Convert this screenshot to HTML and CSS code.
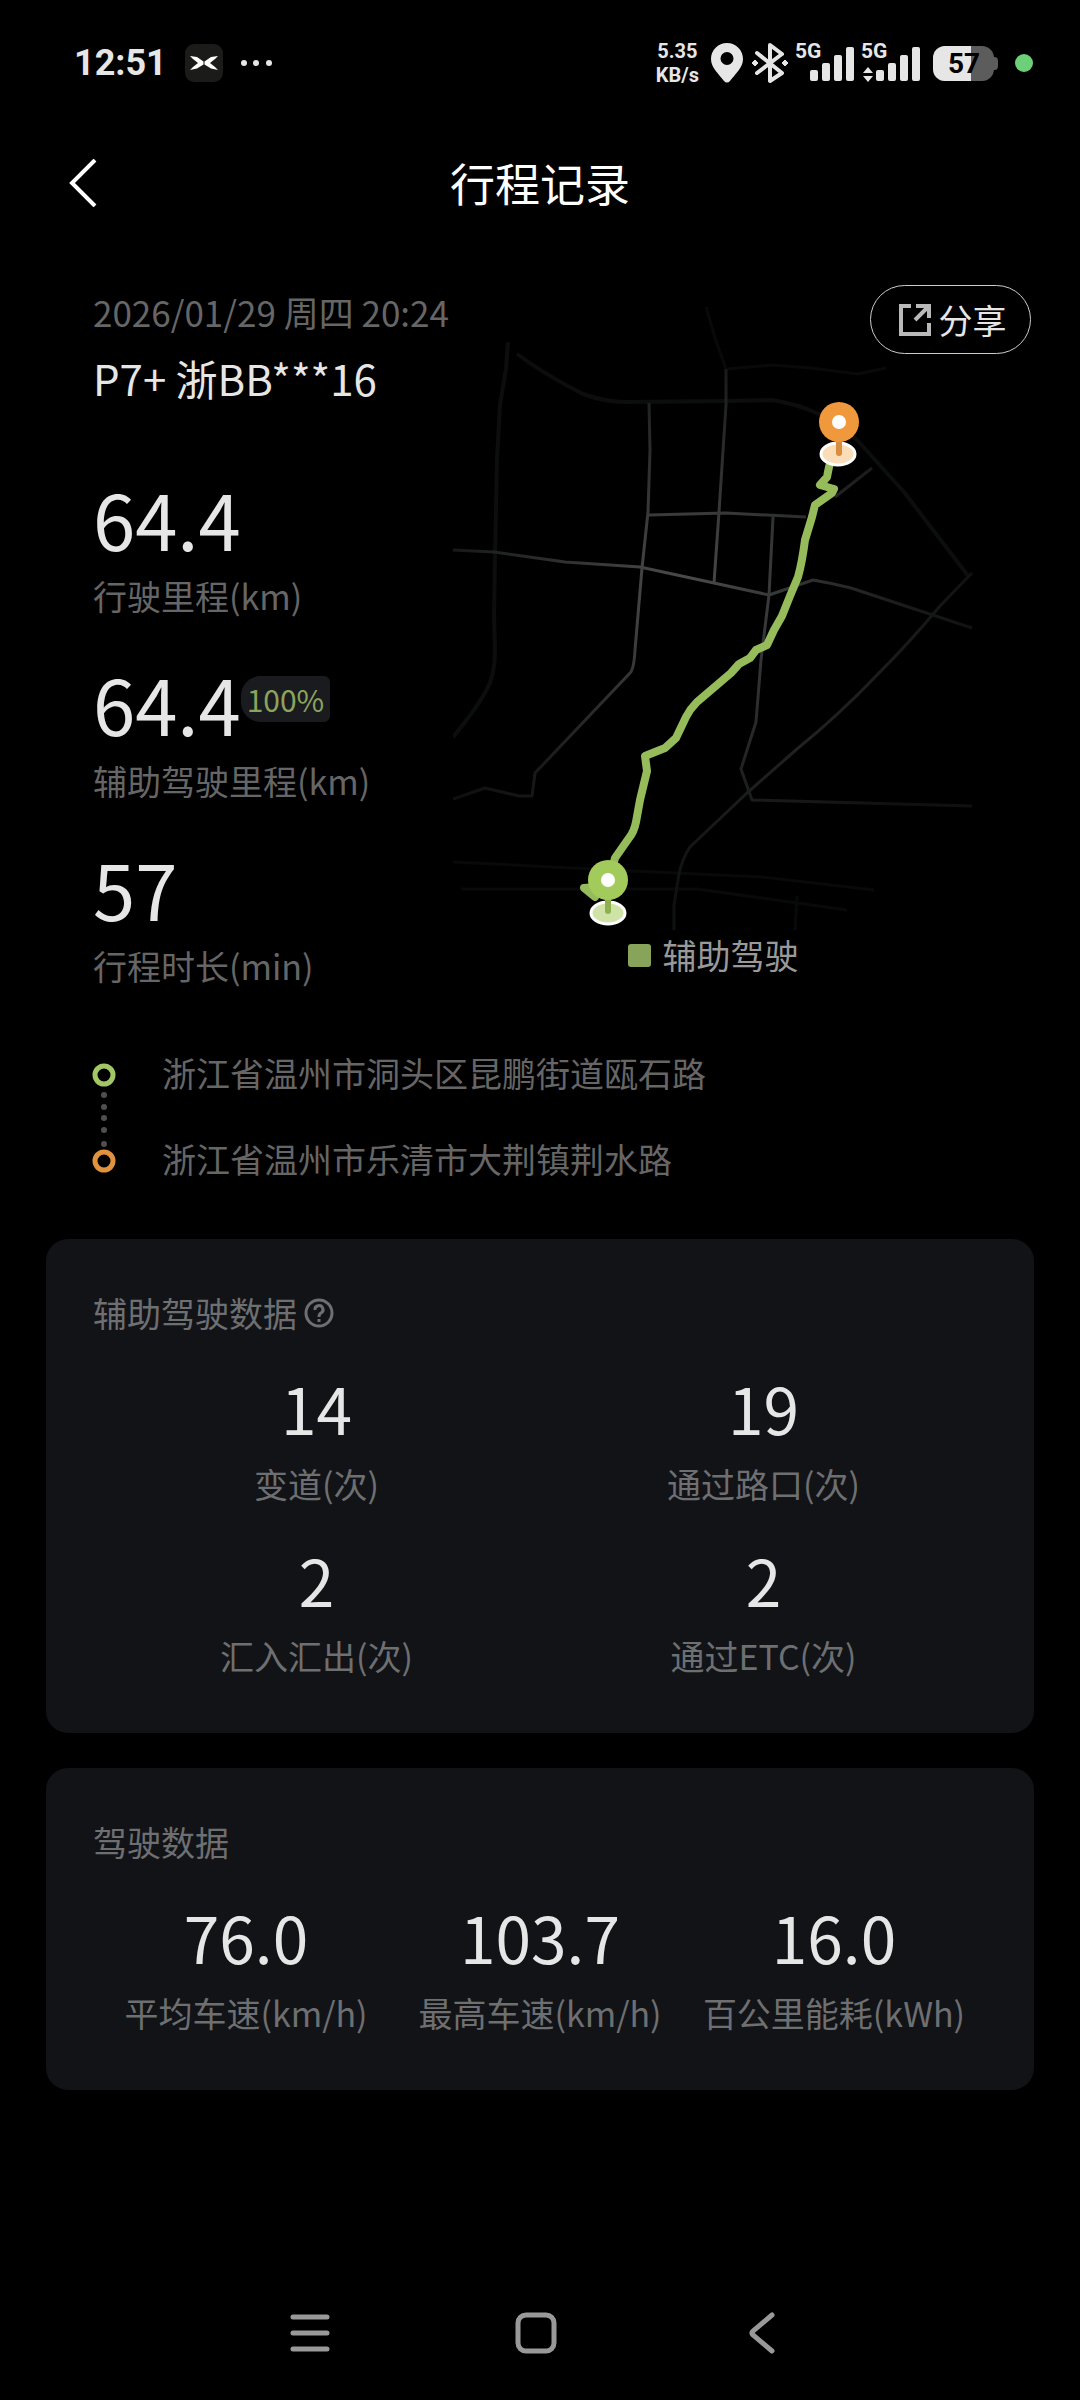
FILE: index.html
```html
<!DOCTYPE html>
<html lang="zh-CN">
<head>
  <meta charset="utf-8" />
  <meta name="viewport" content="width=device-width, initial-scale=1" />
  <title>行程记录</title>
  <link rel="stylesheet" href="styles.css">
</head>
<body>
  <!-- 状态栏 -->
  <div class="status">
    <div class="status-side">
      <span class="clock">12:51</span>
      <svg class="app-icon" width="38" height="38" viewBox="0 0 38 38" aria-hidden="true">
        <rect width="38" height="38" rx="9" fill="#1b1b19"/>
        <g fill="#fff">
          <path d="M5 12 L12 13 L18.5 17.5 V20.5 L12 24.5 L5 26 L8 23 L13 19 L8 15 Z"/>
          <path d="M33 12 L26 13 L19.5 17.5 V20.5 L26 24.5 L33 26 L30 23 L25 19 L30 15 Z"/>
        </g>
      </svg>
      <svg width="34" height="10" viewBox="0 0 34 10" fill="#e6e6e6" aria-hidden="true">
        <circle cx="3" cy="5" r="3"/><circle cx="15" cy="5" r="3"/><circle cx="28" cy="5" r="3"/>
      </svg>
    </div>
    <div class="status-side status-right">
      <span class="speed"><span>5.35</span><span>KB/s</span></span>
      <svg width="32" height="42" viewBox="0 0 32 42" aria-hidden="true">
        <path fill="#e6e6e6" fill-rule="evenodd" d="M16 1 C7 1 0 8 0 17 C0 26 8 32 13 39 Q16 42 19 39 C24 32 32 26 32 17 C32 8 25 1 16 1 Z M16 10 a6 6 0 1 1 0 13 a6 6 0 1 1 0 -13 Z"/>
      </svg>
      <svg width="38" height="42" viewBox="0 0 38 42" aria-hidden="true">
        <path d="M6 11 L31 31 L19 39 V3 L31 12 L6 31" fill="none" stroke="#e6e6e6" stroke-width="4" stroke-linecap="round" stroke-linejoin="round"/>
        <path d="M4 18 L7 21 L4 24 L1 21 Z M34 18 L37 21 L34 24 L31 21 Z" fill="#e6e6e6" stroke="#e6e6e6" stroke-linejoin="round"/>
      </svg>
      <svg class="signal" width="60" height="50" viewBox="0 -4 60 50" fill="#e6e6e6" role="img" aria-label="5G">
        <text x="0" y="16">5G</text>
        <rect x="15" y="28" width="8" height="11" rx="2"/><rect x="27" y="21" width="8" height="18" rx="2"/>
        <rect x="39" y="13" width="8" height="26" rx="2"/><rect x="51" y="5" width="8" height="34" rx="2"/>
      </svg>
      <svg class="signal" width="60" height="50" viewBox="0 -4 60 50" fill="#e6e6e6" role="img" aria-label="5G">
        <text x="0" y="16">5G</text>
        <path d="M7 25 L12 31 H2 Z M7 40 L12 34 H2 Z"/>
        <rect x="15" y="28" width="8" height="11" rx="2"/><rect x="27" y="21" width="8" height="18" rx="2"/>
        <rect x="39" y="13" width="8" height="26" rx="2"/><rect x="51" y="5" width="8" height="34" rx="2"/>
      </svg>
      <svg class="battery" width="66" height="42" viewBox="0 0 66 42" role="img" aria-label="57%">
        <rect x="58" y="15" width="7" height="13" rx="4" fill="#5c5c5c"/>
        <rect x="0" y="4" width="61" height="35" rx="12" fill="#5c5c5c"/>
        <path d="M12 4 H38 V39 H12 A12 12 0 0 1 0 27 V16 A12 12 0 0 1 12 4 Z" fill="#e6e6e6"/>
        <text x="31" y="31" text-anchor="middle">57</text>
      </svg>
      <span class="live-dot"></span>
    </div>
  </div>

  <header class="topbar">
    <button type="button" class="back" aria-label="返回">
      <svg width="30" height="48" viewBox="0 0 30 48" aria-hidden="true">
        <path d="M27 1 L4 24 L27 47" fill="none" stroke="#fff" stroke-width="4"/>
      </svg>
    </button>
    <h1>行程记录</h1>
  </header>

  <main>
    <section class="trip">
      <div class="info">
        <p class="date">2026/01/29 周四 20:24</p>
        <h2 class="car">P7+ 浙BB***16</h2>
        <div class="totals">
          <div class="stat">
            <p class="num">64.4</p>
            <p class="label">行驶里程(km)</p>
          </div>
          <div class="stat">
            <p class="num">64.4<span class="percent">100%</span></p>
            <p class="label">辅助驾驶里程(km)</p>
          </div>
          <div class="stat">
            <p class="num">57</p>
            <p class="label">行程时长(min)</p>
          </div>
        </div>
      </div>

      <div class="map">
        <svg viewBox="0 0 520 630" role="img" aria-label="行程轨迹">
          <defs>
            <radialGradient id="road" gradientUnits="userSpaceOnUse" cx="230" cy="290" r="300">
              <stop offset="0" stop-color="#4c4c4c"/>
              <stop offset="0.4" stop-color="#303131"/>
              <stop offset="0.75" stop-color="#191a1a"/>
              <stop offset="1" stop-color="#0f1010"/>
            </radialGradient>
          </defs>
          <!-- 道路 -->
          <g fill="none" stroke="#0c0e0d" stroke-width="4" stroke-linejoin="round">
            <path d="M55 42 L53 69 L47 105 L44 159 L42 257 L41 315 L42 350 Q42 376 33 391 Q24 408 0 437"/>
            <path d="M64 54 Q94 76 130 94 Q152 102 173 102 L273 101 L319 100 Q345 104 366 114 Q388 125 405 141 L451 192 L516 277"/>
          </g>
          <g fill="none" stroke="#080909" stroke-width="3">
            <path d="M273 69 L319 65 L358 68 L405 74 L433 68"/>
            <path d="M253 7 L262 38 L273 69"/>
            <path d="M0 562 L180 571 L308 577 L421 590"/>
            <path d="M8 589 L244 589 L394 610"/>
            <path d="M344 596 L342 630"/>
          </g>
          <g fill="none" stroke="url(#road)" stroke-width="3" stroke-linejoin="round">
            <path d="M273 69 V105 L266 212 L261 283"/>
            <path d="M196 103 L197 150 L195 212 L189 268 L182 350 Q181 369 177 373 L82 473 L79 496 L66 496 L32 488 L0 499"/>
            <path d="M196 215 L273 213 L353 217"/>
            <path d="M0 250 L41 252 L112 262 L187 267 L261 283 L316 295 L360 280 Q378 283 398 288 L519 328"/>
            <path d="M320 217 L316 295 L308 360 L303 422 L288 469 L299 500 L519 506"/>
            <path d="M519 273 L487 306 Q456 343 426 373 Q386 415 344 449 L294 493 L237 547 Q229 559 226 574 L221 605 V630"/>
            <path d="M419 168 L382 197"/>
          </g>
          <!-- 轨迹 -->
          <path d="M378 160 L376 167 L374 177 L367 185 L381 189 L379 193 L362 205 L359 217 L352 240 Q349 263 345 277 L337 296 L329 316 L321 330 L314 345 L303 350 L297 358 L286 364 L278 373 L244 402 Q237 409 233 417 L223 438 L212 448 L192 456 L194 471 L187 500 L183 522 Q181 532 176 538 L162 558 L155 586 L131 588 L142 597" fill="none" stroke="#96bb5a" stroke-width="8" stroke-linejoin="round" stroke-linecap="round"/>
          <!-- 终点 -->
          <ellipse cx="385" cy="154" rx="17" ry="11" fill="#fbdcb9" stroke="#fff" stroke-width="3"/>
          <path d="M386 138 V153" stroke="#d98b3e" stroke-width="6" stroke-linecap="round"/>
          <circle cx="386" cy="122" r="20" fill="#f0983c"/>
          <circle cx="386" cy="122" r="7" fill="#fff"/>
          <!-- 起点 -->
          <ellipse cx="155" cy="613" rx="17" ry="11" fill="#cfe3a9" stroke="#fff" stroke-width="3"/>
          <path d="M155 597 V611" stroke="#8fb04f" stroke-width="6" stroke-linecap="round"/>
          <circle cx="155" cy="580" r="20" fill="#a3cb5b"/>
          <circle cx="155" cy="580" r="7" fill="#fff"/>
        </svg>
        <p class="legend"><span class="swatch"></span>辅助驾驶</p>
      </div>

      <button type="button" class="share">
        <svg width="32" height="32" viewBox="0 0 32 32" fill="none" stroke="#b9b9b9" stroke-width="4" aria-hidden="true">
          <path d="M12 2 H2 V30 H30 V19"/>
          <path d="M17 2 H30 V14 M29 3 L16 16"/>
        </svg>
        分享
      </button>
    </section>

    <section class="route">
      <svg class="route-line" width="24" height="110" viewBox="0 0 24 110" aria-hidden="true">
        <circle cx="12" cy="12" r="9" fill="none" stroke="#a3c765" stroke-width="5"/>
        <g fill="#4f4f4f">
          <circle cx="12" cy="32" r="3"/><circle cx="12" cy="44" r="3"/><circle cx="12" cy="55" r="3"/>
          <circle cx="12" cy="67" r="3"/><circle cx="12" cy="81" r="3"/>
        </g>
        <circle cx="12" cy="98" r="9" fill="none" stroke="#e0923f" stroke-width="5"/>
      </svg>
      <ol class="places">
        <li>浙江省温州市洞头区昆鹏街道瓯石路</li>
        <li>浙江省温州市乐清市大荆镇荆水路</li>
      </ol>
    </section>

    <section class="card">
      <h2 class="card-title">辅助驾驶数据
        <button type="button" class="help" aria-label="说明">
          <svg width="30" height="30" viewBox="0 0 30 30" fill="none" stroke="#6e6f71" stroke-width="3" aria-hidden="true">
            <circle cx="15" cy="15" r="13"/>
            <path d="M11 12 a4 4 0 1 1 6 3 Q15 16 15 19"/>
            <path d="M15 21 V24"/>
          </svg>
        </button>
      </h2>
      <div class="grid two">
        <div class="stat">
          <p class="num">14</p>
          <p class="label">变道(次)</p>
        </div>
        <div class="stat">
          <p class="num">19</p>
          <p class="label">通过路口(次)</p>
        </div>
        <div class="stat">
          <p class="num">2</p>
          <p class="label">汇入汇出(次)</p>
        </div>
        <div class="stat">
          <p class="num">2</p>
          <p class="label">通过ETC(次)</p>
        </div>
      </div>
    </section>

    <section class="card">
      <h2 class="card-title">驾驶数据</h2>
      <div class="grid three">
        <div class="stat">
          <p class="num">76.0</p>
          <p class="label">平均车速(km/h)</p>
        </div>
        <div class="stat">
          <p class="num">103.7</p>
          <p class="label">最高车速(km/h)</p>
        </div>
        <div class="stat">
          <p class="num">16.0</p>
          <p class="label">百公里能耗(kWh)</p>
        </div>
      </div>
    </section>
  </main>

  <!-- 系统导航键 -->
  <nav class="navkeys">
    <button type="button" aria-label="最近任务">
      <svg width="44" height="44" viewBox="0 0 44 44" aria-hidden="true">
        <path d="M5 6 H39 M5 22 H39 M5 38 H39"/>
      </svg>
    </button>
    <button type="button" aria-label="主屏幕">
      <svg width="44" height="44" viewBox="0 0 44 44" aria-hidden="true">
        <rect x="4" y="4" width="36" height="36" rx="8"/>
      </svg>
    </button>
    <button type="button" aria-label="返回">
      <svg width="44" height="44" viewBox="0 0 44 44" aria-hidden="true">
        <path d="M32 4 L13 20 Q11 22 13 24 L32 40"/>
      </svg>
    </button>
  </nav>
</body>
</html>
```
FILE: styles.css
```css
*{box-sizing:border-box;}
body{
  margin:0;
  min-height:100vh;
  display:flex;
  flex-direction:column;
  background:#000;
  color:#e6e6e6;
  font-family:"Noto Sans CJK SC",sans-serif;
  font-size:34px;
  line-height:50px;
}
h1,h2,p,ol{margin:0;padding:0;font-weight:400;}
button{
  padding:0;
  border:none;
  background:none;
  color:inherit;
  font:inherit;
  cursor:pointer;
}
svg{display:block;}

/* status bar */
.status{
  display:flex;
  justify-content:space-between;
  align-items:center;
  height:126px;
  padding:0 47px 0 74px;
  font-family:Roboto,sans-serif;
  font-weight:700;
}
.status-side{display:flex;align-items:center;gap:18px;}
.status-right{gap:8px;}
.clock{font-size:36px;}
.speed{
  display:grid;
  margin-right:4px;
  font-size:20px;
  line-height:24px;
  text-align:center;
}
.signal text{font-size:21px;}
.signal{margin-left:-2px;}
.battery{margin-left:4px;}
.battery text{font-size:28px;fill:#000;}
.live-dot{
  width:18px;
  height:18px;
  margin-left:8px;
  border-radius:50%;
  background:#6bd077;
}

/* title */
.topbar{
  display:grid;
  grid-template-columns:60px 1fr 60px;
  align-items:center;
  height:114px;
  padding:0 53px;
}
.back{display:flex;justify-content:center;}
.topbar h1{
  font-size:45px;
  line-height:60px;
  text-align:center;
  color:#fff;
}

/* trip summary */
.trip{
  position:relative;
  display:grid;
  grid-template-columns:360fr 520fr;
  align-items:start;
  padding:47px 107px 0 93px;
}
.date{font-size:35px;color:#666;white-space:nowrap;}
.car{margin-top:11px;font-size:42px;line-height:60px;}
.totals{
  display:grid;
  gap:37px;
  margin-top:65px;
}
.label{color:#666;white-space:nowrap;}
.totals .num{
  display:flex;
  align-items:flex-start;
  margin-bottom:8px;
  font-size:76px;
  line-height:90px;
}
.percent{
  margin-top:18px;
  padding:0 6px;
  border-radius:20px 6px 6px 20px;
  background:#1a1b1f;
  color:#8ca35c;
  font-size:30px;
  line-height:46px;
}
.map{margin-top:13px;}
.map svg{width:100%;height:auto;}
.legend{
  display:flex;
  justify-content:center;
  align-items:center;
  gap:12px;
  color:#999;
}
.swatch{
  width:23px;
  height:23px;
  border-radius:3px;
  background:#88a35a;
}
.share{
  position:absolute;
  top:45px;
  right:49px;
  display:flex;
  justify-content:center;
  align-items:center;
  gap:8px;
  width:161px;
  height:69px;
  padding-left:4px;
  border:1px solid #ccc;
  border-radius:35px;
}

/* start / end */
.route{
  display:flex;
  gap:46px;
  padding:57px 92px 55px;
}
.route-line{margin-top:15px;}
.places{
  display:grid;
  gap:36px;
  list-style:none;
  color:#666;
}

/* data cards */
.card{
  margin:0 46px 35px;
  padding:49px 47px 52px;
  border-radius:22px;
  background:#121317;
}
.card-title{
  display:flex;
  align-items:center;
  gap:7px;
  font-size:34px;
  color:#6e6f71;
}
.grid{
  display:grid;
  row-gap:30px;
  margin-top:29px;
  text-align:center;
}
.two{grid-template-columns:repeat(2,1fr);}
.three{grid-template-columns:repeat(3,1fr);padding:0 6px;}
.card .num{
  margin-bottom:12px;
  font-size:64px;
  line-height:80px;
}
.card .label{color:#6e6f71;}

/* system keys */
.navkeys{
  display:flex;
  justify-content:center;
  gap:166px;
  margin-top:auto;
  padding:0 8px 37px 0;
}
.navkeys button{
  display:flex;
  justify-content:center;
  align-items:center;
  width:60px;
  height:60px;
}
.navkeys svg{
  fill:none;
  stroke:#999;
  stroke-width:5px;
  stroke-linecap:round;
}
```
